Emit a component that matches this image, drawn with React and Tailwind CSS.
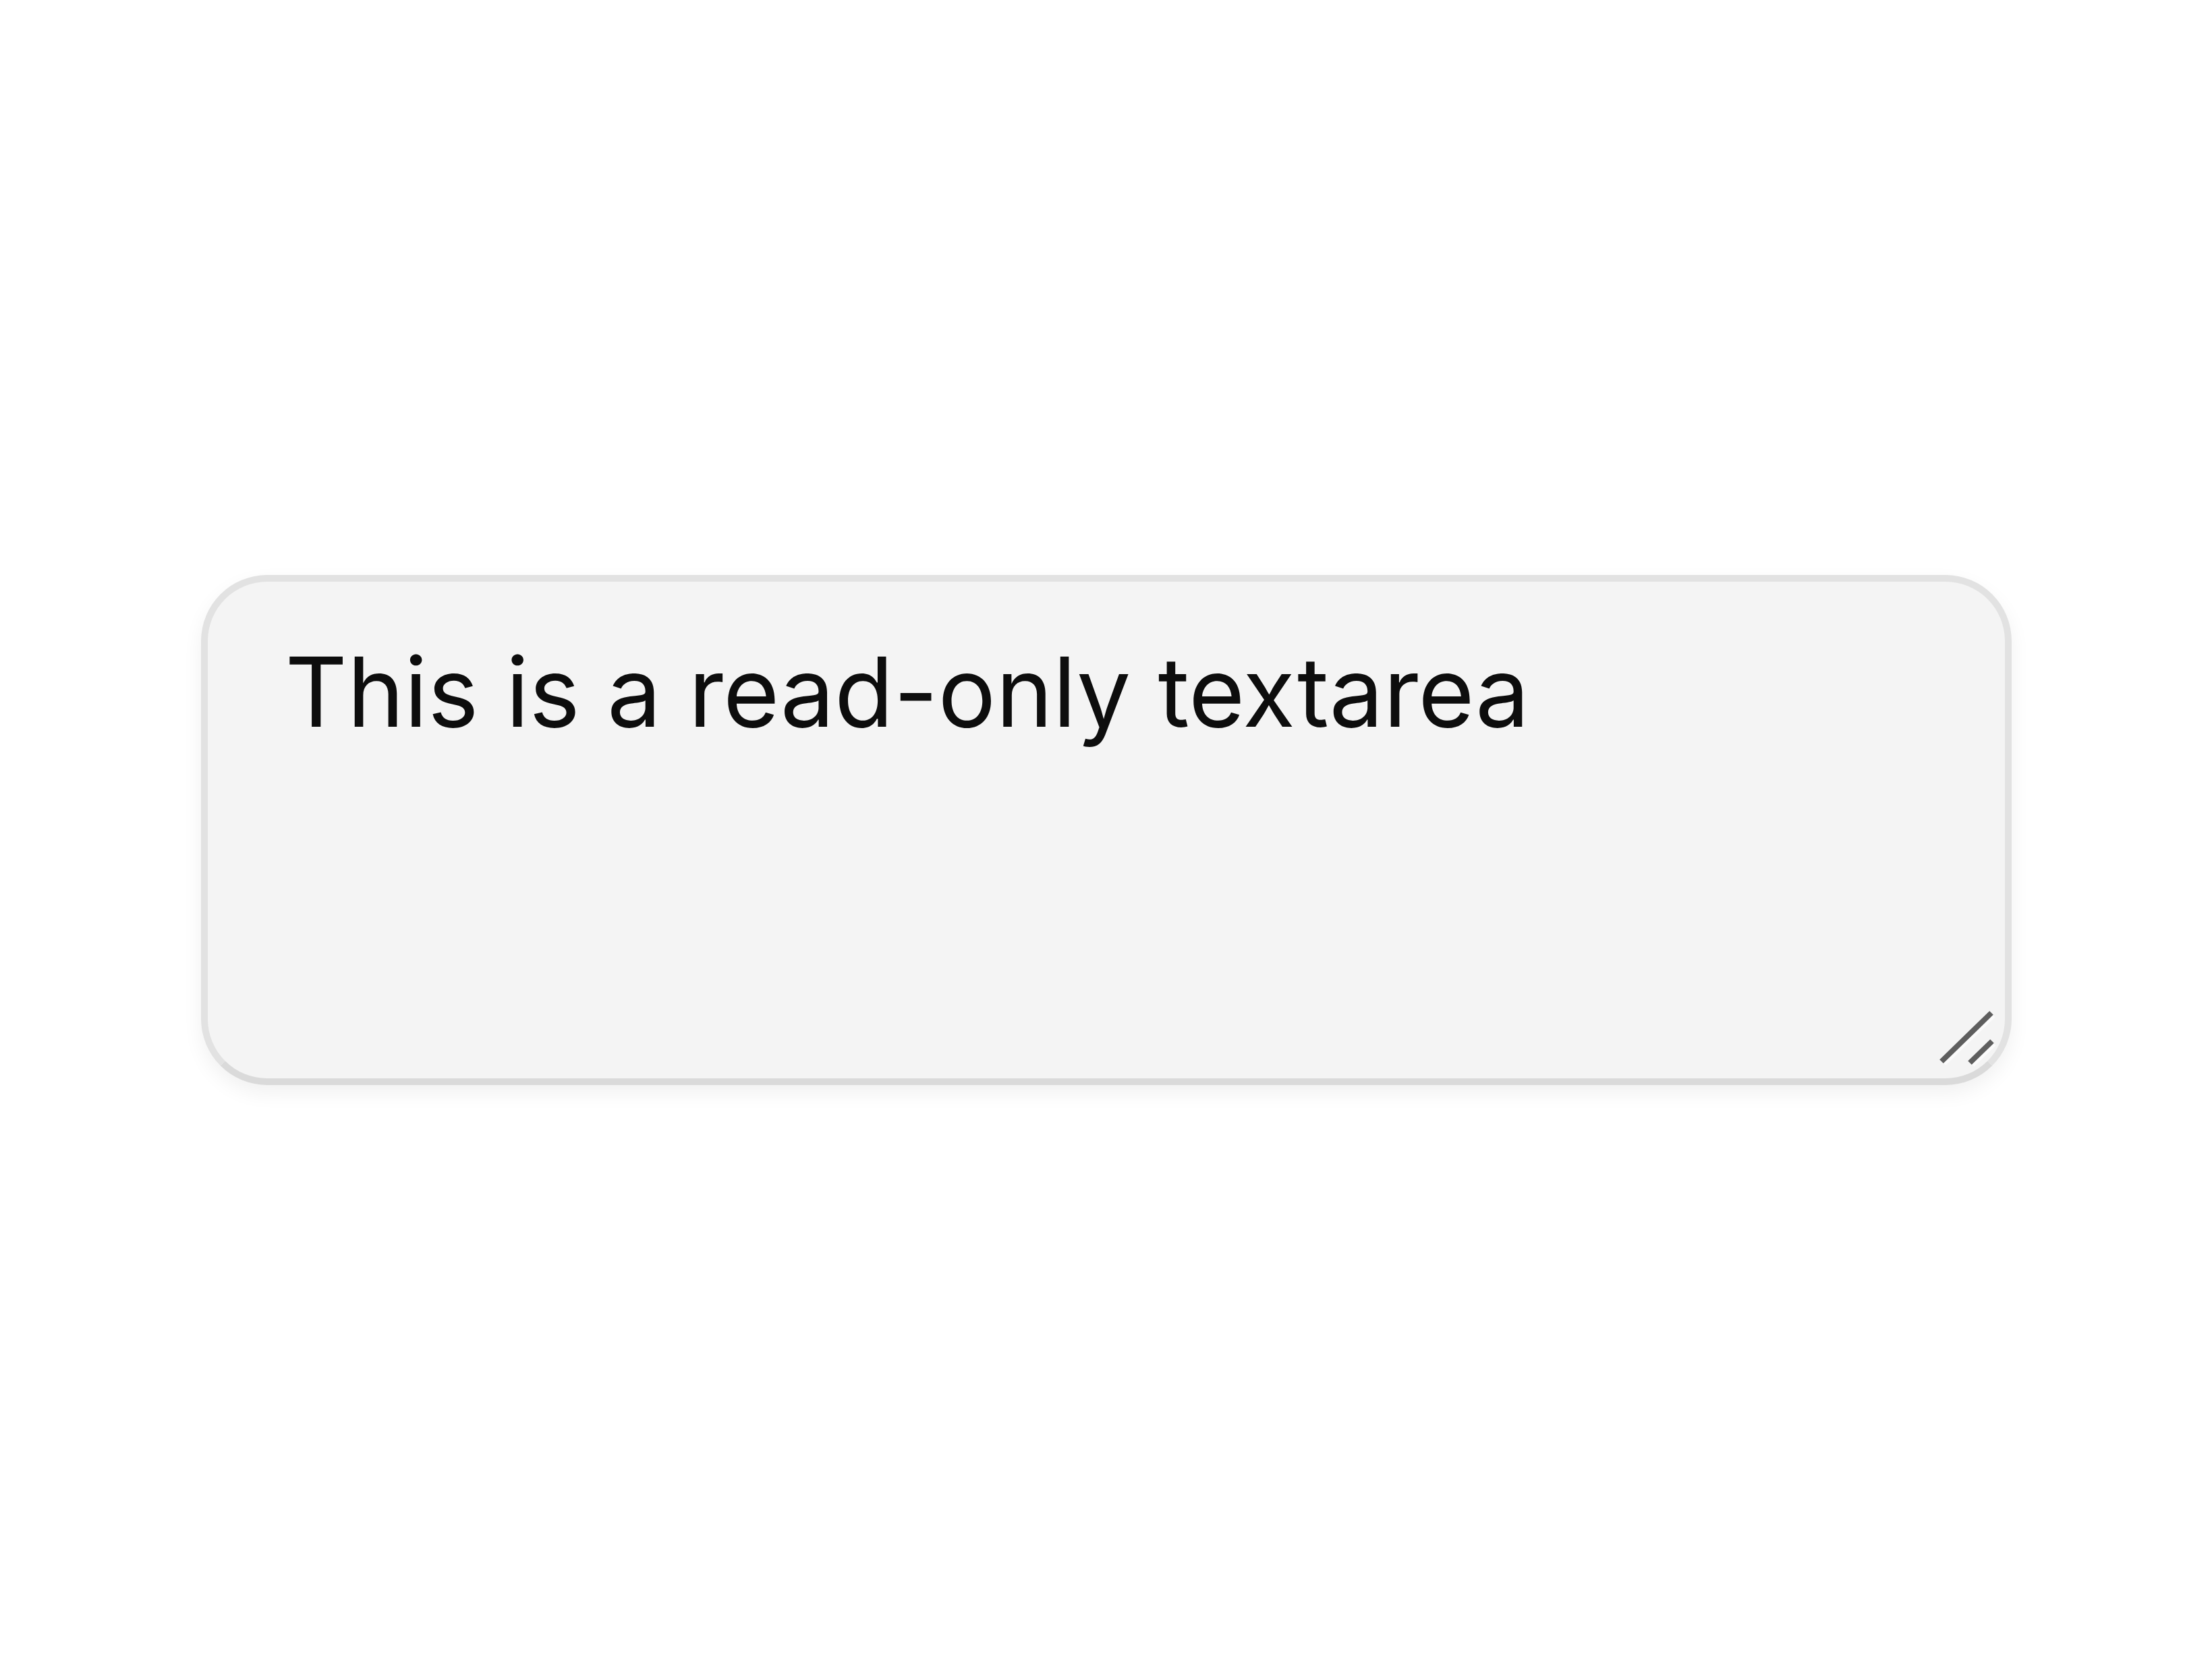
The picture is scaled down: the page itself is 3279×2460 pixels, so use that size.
import { useState } from "react";

function ResizeGrip() {
  return (
    <svg
      className="pointer-events-none absolute right-[19px] bottom-[18px]"
      width="100"
      height="100"
      viewBox="0 0 100 100"
    >
      <line x1="19" y1="86" x2="92" y2="15" stroke="#fbfbfb" strokeWidth="7" />
      <line x1="61" y1="88" x2="93" y2="57" stroke="#fbfbfb" strokeWidth="7" />
      <line x1="15" y1="83" x2="89" y2="11" stroke="#5e5e5e" strokeWidth="8" />
      <line x1="57" y1="85" x2="90" y2="53" stroke="#5e5e5e" strokeWidth="8" />
    </svg>
  );
}

export default function App() {
  const [value] = useState("This is a read-only textarea");

  return (
    <div className="flex min-h-screen items-center justify-center bg-white">
      <div className="relative rounded-[98px] shadow-[0_12px_30px_rgba(0,0,0,0.06)]">
        <textarea
          readOnly
          value={value}
          className="block h-[756px] w-[2684px] resize-none rounded-[98px] border-[10px] border-[#e2e2e2] border-b-[#dadada] bg-[#f4f4f4] pt-[56px] pr-[114px] pl-[115px] font-['Inter','Liberation_Sans',sans-serif] text-[143px] leading-normal text-[#0d0d0d] outline-none"
        />
        <ResizeGrip />
      </div>
    </div>
  );
}
